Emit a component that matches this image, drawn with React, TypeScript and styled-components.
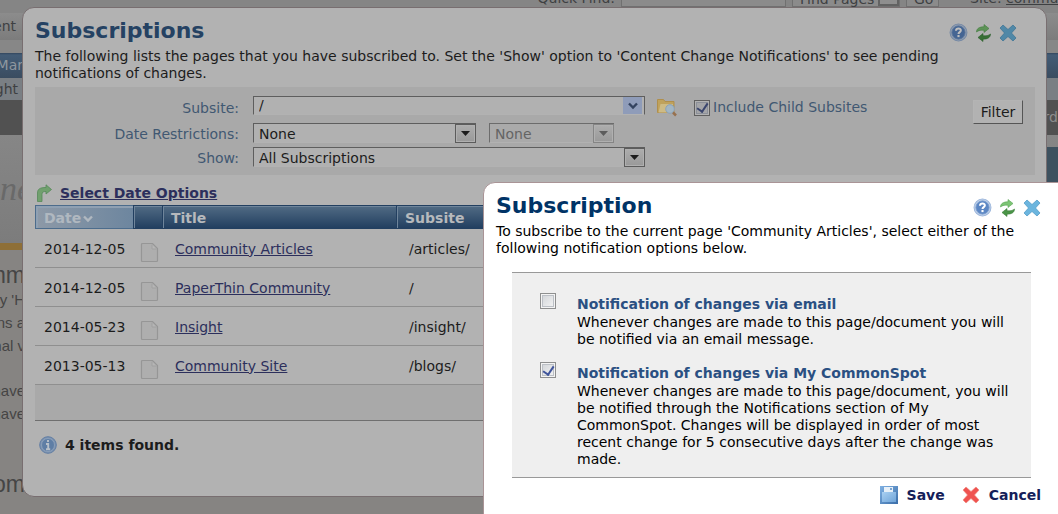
import React from 'react';
import styled, { createGlobalStyle, css } from 'styled-components';

const Global = createGlobalStyle`
  * { box-sizing: border-box; }
  body { margin: 0; background: #868482; overflow: hidden; }
  body, button, input, select { font-family: "DejaVu Sans", Verdana, sans-serif; font-size: 14px; line-height: 17px; }
  h1, h2, p { margin: 0; }
`;

const Screen = styled.div`
  position: relative;
  height: 100vh;
  min-height: 514px;
  overflow: hidden;
  color: #3e4042;
`;

const FindBar = styled.div`
  height: 13px;
  display: flex;
  align-items: flex-end;
  justify-content: flex-end;
  gap: 6px;
  padding-bottom: 6px;
  background: #858585;
`;
const FindText = styled.span`
  line-height: 17px;
  white-space: nowrap;
`;
const FindCell = styled.span<{ $width: number }>`
  flex: none;
  width: ${p => p.$width}px;
  height: 17px;
  display: flex;
  justify-content: space-between;
  padding-left: 7px;
  border: 1px solid #707070;
  line-height: 17px;
  background: #8b8b8b;
`;
const FindArrow = styled.span`
  width: 21px;
  border: 2px solid #626262;
  background: #8e8e8e;
`;
const SiteText = styled(FindText)`
  flex: none;
  width: 113px;
  padding-left: 25px;
  a { color: inherit; }
`;

const Band = styled.div<{ $h: number; $bg: string; $fg?: string }>`
  height: ${p => p.$h}px;
  background: ${p => p.$bg};
  color: ${p => p.$fg || '#3e4042'};
  display: flex;
  align-items: center;
  justify-content: space-between;
  white-space: nowrap;
`;
const Stub = styled.span<{ $w: number }>`
  width: ${p => p.$w}px;
  display: flex;
  justify-content: flex-end;
`;
const Script = styled.span`
  font: italic 34px/40px "Liberation Serif", serif;
  color: #696969;
`;
const SideBlock = styled.span`
  align-self: flex-start;
  width: 12px;
  height: 60px;
  margin-top: 12px;
  background: #3d515f;
`;
const Behind = styled.div`
  padding-top: 12px;
  font-family: "Liberation Sans", Arial, sans-serif;
`;
const BehindText = styled.p<{ $big?: boolean; $gap?: number }>`
  width: 25px;
  display: flex;
  justify-content: flex-end;
  white-space: nowrap;
  color: #454545;
  margin-top: ${p => p.$gap || 0}px;
  font-size: ${p => (p.$big ? 23 : 15)}px;
  line-height: ${p => (p.$big ? 26 : 23)}px;
`;

const dialog = css`
  position: absolute;
  border: 1px solid #8c7f80;
  border-radius: 12px;
`;
const ListDialog = styled.section`
  ${dialog}
  left: 22px;
  right: 11px;
  top: 7px;
  height: 490px;
  padding: 9px 11px 0 12px;
  border-color: #786e70;
  background: #b2b2b2;
  color: #1c1c1c;
`;
const FormDialog = styled.section`
  ${dialog}
  left: 483px;
  right: -12px;
  top: 182px;
  bottom: -12px;
  padding: 9px 28px 0 12px;
  border-color: #a99496;
  background: #fff;
  color: #000;
`;
const DialogHead = styled.header`
  display: flex;
  align-items: flex-start;
  justify-content: space-between;
  height: 31px;
`;
const Title = styled.h1<{ $dim?: boolean }>`
  font-size: 22px;
  line-height: 28px;
  color: ${p => (p.$dim ? '#254263' : '#003366')};
`;
const Tools = styled.div<{ $dim?: boolean }>`
  display: flex;
  align-items: center;
  gap: 7px;
  padding: 6px ${p => (p.$dim ? 18 : 0)}px 0 0;
  filter: ${p => (p.$dim ? 'brightness(0.75)' : 'none')};
`;
const IconButton = styled.button`
  display: flex;
  padding: 0;
  border: 0;
  background: none;
`;
const Intro = styled.p<{ $dim?: boolean }>`
  padding-right: ${p => (p.$dim ? 40 : 0)}px;
`;

const Filters = styled.form`
  display: grid;
  grid-template-columns: 207px 392px 1fr auto;
  column-gap: 11px;
  grid-template-rows: 23px 20px 20px;
  row-gap: 4px;
  align-items: center;
  margin-top: 5px;
  height: 88px;
  padding: 9px 12px 0 0;
  background: #a9a9a9;
`;
const Label = styled.label`
  padding: 2px 3px 0 0;
  color: #415872;
  text-align: right;
`;
const Field = styled.div`
  display: flex;
  gap: 13px;
`;
const ComboBox = styled.div`
  display: flex;
  align-self: start;
  height: 19px;
  border: 1px solid #5e5e5e;
  border-bottom-color: #b2b2b2;
  background: #b1b1b1;
`;
const ComboInput = styled.input`
  flex: 1;
  min-width: 0;
  padding: 0 5px;
  border: 0;
  background: none;
  color: #1c1c1c;
`;
const ComboArrow = styled.button`
  width: 19px;
  margin-right: 2px;
  padding: 0;
  border: 0;
  background: #8f9cb9;
  display: flex;
  align-items: center;
  justify-content: center;
`;
const SelectWrap = styled.div<{ $width?: number; $off?: boolean }>`
  position: relative;
  height: 20px;
  ${p => (p.$width ? `width: ${p.$width}px;` : 'flex: 1;')}
  border: 1px solid ${p => (p.$off ? '#6c6c6c' : '#5e5e5e')};
  border-bottom-color: #b2b2b2;
  background: ${p => (p.$off ? '#aaa' : '#b1b1b1')};
`;
const Select = styled.select`
  appearance: none;
  display: block;
  width: 100%;
  height: 20px;
  padding: 1px 24px 0 5px;
  border: 0;
  background: none;
  color: #1c1c1c;
  &:disabled { color: #646464; opacity: 1; }
`;
const SelectArrow = styled.span<{ $off?: boolean }>`
  position: absolute;
  right: -1px;
  top: 0;
  width: 21px;
  height: 19px;
  display: flex;
  align-items: center;
  justify-content: center;
  pointer-events: none;
  border: 1px solid ${p => (p.$off ? '#858585' : '#5c5c5c')};
  background: linear-gradient(#adadad, #999);
  box-shadow: inset 0 0 0 1px #b0b0b0;
`;
const Include = styled.div`
  display: flex;
  align-items: center;
  gap: 3px;
  color: #415872;
  white-space: nowrap;
`;
const BrowseButton = styled(IconButton)`
  margin-right: 13px;
`;
const CheckBox = styled.input<{ $dim?: boolean }>`
  appearance: none;
  width: 16px;
  height: 16px;
  margin: 0;
  flex: none;
  border: 1px solid ${p => (p.$dim ? '#5f5f5f' : '#8e8f8f')};
  background: ${p => (p.$dim ? '#a4a5a8' : 'linear-gradient(135deg, #cfd2d6, #f6f6f6)')};
  box-shadow: inset 0 0 0 1px ${p => (p.$dim ? '#b2b2b2' : '#f4f4f4')}, inset 0 0 0 2px ${p => (p.$dim ? '#8c9099' : '#bcc0c6')};
  display: grid;
  place-items: center;
  &:checked::after {
    content: "";
    width: 5px;
    height: 9px;
    margin-top: -2px;
    border: solid ${p => (p.$dim ? '#3a456d' : '#3f549b')};
    border-width: 0 2px 2px 0;
    transform: rotate(34deg);
  }
`;
const FilterButton = styled.button`
  grid-column: 4;
  grid-row: 1 / 3;
  align-self: start;
  height: 24px;
  width: 50px;
  margin-top: 4px;
  padding: 0;
  border: 1px solid #b4b4b4;
  border-right-color: #555;
  border-bottom-color: #555;
  background: #b2b2b2;
  color: #1c1c1c;
`;

const DateLink = styled.a`
  color: #2c2f5c;
  font-weight: bold;
`;
const DateRow = styled.div`
  display: flex;
  align-items: center;
  gap: 7px;
  height: 30px;
  padding: 6px 0 0 1px;
`;

const List = styled.table`
  width: 100%;
  table-layout: fixed;
  border-collapse: separate;
  border-spacing: 0;
  white-space: nowrap;
`;
const HeadCell = styled.th<{ $active?: boolean }>`
  height: 24px;
  padding: 2px 0 0 8px;
  text-align: left;
  color: ${p => (p.$active ? '#b0b8c0' : '#b6b9bc')};
  background: ${p => (p.$active ? 'linear-gradient(90deg, #8d99a7, #6d869f)' : 'linear-gradient(#516b84, #223f60)')};
  border: solid ${p => (p.$active ? '#4c6c8c' : '#223f60')};
  border-width: 1px 0 1px 1px;
  box-shadow: inset ${p => (p.$active ? '2px 2px 0 #8fa0b2' : '1px 1px 0 #6f859b')};
  svg { margin-left: 2px; }
`;
const Cell = styled.td`
  height: 39px;
  padding: 2px 0 0 9px;
  border-bottom: 1px solid #8f8f8f;
  a { color: #2c2f5c; margin-left: 4px; }
  span { margin-left: 4px; }
  svg { display: block; margin: 6px 0 0 -2px; }
`;
const FootCell = styled.td`
  height: 36px;
  background: #a9a9a9;
  border-bottom: 1px solid #6f6f6f;
`;
const Found = styled.p`
  display: flex;
  align-items: center;
  gap: 8px;
  padding: 15px 4px 0;
  font-weight: bold;
`;

const Options = styled.div`
  margin: 15px 10px 0 16px;
  padding: 20px 12px 9px 28px;
  display: flex;
  flex-direction: column;
  gap: 14px;
  background: #efefef;
  border: solid #999;
  border-width: 1px 0;
`;
const Option = styled.div`
  display: flex;
  gap: 21px;
`;
const OptionText = styled.div`
  padding-top: 2px;
`;
const OptionLabel = styled.label`
  display: block;
  font-weight: bold;
  line-height: 19px;
  color: #2a5082;
`;
const Actions = styled.footer`
  display: flex;
  justify-content: flex-end;
  gap: 17px;
  margin-top: 8px;
`;
const Action = styled.button`
  display: flex;
  align-items: center;
  gap: 9px;
  padding: 0;
  border: 0;
  background: none;
  font-weight: bold;
  color: #142059;
`;

const HelpIcon = () => (
  <svg width="19" height="19" viewBox="0 0 18 18">
    <circle cx="9" cy="9" r="8" fill="#c3d3ea" stroke="#9db7dc" />
    <circle cx="9" cy="9" r="6.3" fill="#5c87c4" stroke="#7ea0d0" strokeWidth=".8" />
    <path d="M6.6 7.3C6.8 4.4 11.4 4.5 11.2 7.2 11.1 8.6 9 8.7 9 10.4" fill="none" stroke="#fff" strokeWidth="1.9" />
    <rect x="8" y="11.4" width="2" height="2" fill="#fff" />
  </svg>
);
const RefreshIcon = () => (
  <svg width="17" height="18" viewBox="0 0 17 18">
    <path d="M1.500 8C1.500 4.500 4.500 2.800 9 2.800V.5L14 4.500 9 8.500V6.200C6 6 3.500 6.300 1.500 8z" fill="#7cc474" stroke="#58a452" strokeWidth=".6" />
    <path d="M15.500 10C15.500 13.500 12.500 15.200 8 15.200V17.500L3 13.500 8 9.500V11.800C11 12 13.500 11.700 15.500 10z" fill="#4a9447" stroke="#397c38" strokeWidth=".6" />
  </svg>
);
const CloseIcon = ({ color = '#6bb5de', edge = '#4b97c4', size = 18 }: { color?: string; edge?: string; size?: number }) => (
  <svg width={size} height={size} viewBox="0 0 18 18">
    <path d="M1 4L4 1 9 5.500 14 1 17 4 12.500 9 17 14 14 17 9 12.500 4 17 1 14 5.500 9z" fill={color} stroke={edge} strokeWidth=".7" strokeLinejoin="round" />
  </svg>
);
const FolderIcon = () => (
  <svg width="22" height="19" viewBox="0 0 22 19">
    <path d="M1.500 1.500h6l1.500 2h9v11h-16.500z" fill="#bfa25c" stroke="#b08f4c" />
    <path d="M4.500 6h12.500v8.500H2.500z" fill="#cdbb86" />
    <circle cx="14" cy="11" r="4.300" fill="#a2b6c4" stroke="#8ba1b8" />
    <path d="M17 14.500l3 3" stroke="#97714f" strokeWidth="2.500" />
  </svg>
);
const TurnIcon = () => (
  <svg width="17" height="18" viewBox="0 0 17 18">
    <path d="M1.500 17.500V9C1.500 5 4 3.500 10 3.500V.8L15.500 5.500 10 10V7.500C7 7.500 6 8 6 10.500V17.500z" fill="#71a06e" stroke="#568959" strokeWidth=".8" />
  </svg>
);
const PageIcon = () => (
  <svg width="19" height="21" viewBox="0 0 19 21">
    <path d="M2.500 1.500H12.500L17.500 6.500V18.500Q17.500 19.500 16.500 19.500H2.500Q1.500 19.500 1.500 18.500V2.500Q1.500 1.500 2.500 1.500z" fill="#aeaeae" stroke="#969696" strokeWidth="1.200" />
    <path d="M12 2.500V7H16.500" fill="#b6b6b6" stroke="#a0a0a0" />
  </svg>
);
const InfoIcon = () => (
  <svg width="18" height="18" viewBox="0 0 18 18">
    <circle cx="9" cy="9" r="8.300" fill="#7d93b1" stroke="#607da3" />
    <circle cx="9" cy="9" r="6.500" fill="#5f7ea5" stroke="#95a7bd" strokeWidth=".7" />
    <path d="M9 4v2M7 8h2.200v5M7 13.200h4.200" fill="none" stroke="#b8c0c9" strokeWidth="1.900" />
  </svg>
);
const SaveIcon = () => (
  <svg width="18" height="18" viewBox="0 0 18 18">
    <defs>
      <linearGradient id="disk" x1="0" y1="0" x2="1" y2="1">
        <stop offset="0" stopColor="#7fb0e2" />
        <stop offset="1" stopColor="#3a6da8" />
      </linearGradient>
      <linearGradient id="plate" x1="0" y1="0" x2="1" y2="1">
        <stop offset="0" stopColor="#a9d0f2" />
        <stop offset="1" stopColor="#6fa4d8" />
      </linearGradient>
    </defs>
    <rect width="18" height="18" fill="url(#disk)" />
    <rect x="2" y="6" width="14" height="10" fill="url(#plate)" />
    <rect x="4" y="1" width="9" height="5" fill="#e7f0f8" />
    <rect x="10" y="2" width="2" height="2" fill="#7aa5d2" />
  </svg>
);
const Chevron = ({ color, width = 10 }: { color: string; width?: number }) => (
  <svg width={width} height="8" viewBox="0 0 10 8">
    <path d="M1 1.500l4 4 4-4" fill="none" stroke={color} strokeWidth="2.400" />
  </svg>
);
const Triangle = ({ color }: { color: string }) => (
  <svg width="9" height="5" viewBox="0 0 9 5"><path d="M0 0h9L4.500 5z" fill={color} /></svg>
);

const DialogTools = ({ dim }: { dim?: boolean }) => (
  <Tools $dim={dim}>
    <IconButton aria-label="Help"><HelpIcon /></IconButton>
    <IconButton aria-label="Refresh"><RefreshIcon /></IconButton>
    <IconButton aria-label="Close"><CloseIcon /></IconButton>
  </Tools>
);

const rows = [
  ['2014-12-05', 'Community Articles', '/articles/'],
  ['2014-12-05', 'PaperThin Community', '/'],
  ['2014-05-23', 'Insight', '/insight/'],
  ['2013-05-13', 'Community Site', '/blogs/'],
];

export default function App() {
  return (
    <Screen>
      <Global />
      <FindBar>
        <FindText>Quick Find:</FindText>
        <FindCell $width={165} />
        <FindCell $width={108}>Find Pages<FindArrow /></FindCell>
        <FindCell $width={33}>Go</FindCell>
        <SiteText>Site: <a href="#site">commu</a></SiteText>
      </FindBar>
      <Band $h={27} $bg="linear-gradient(#8c8c8c, #7c7c7c)"><Stub $w={16}>ent</Stub></Band>
      <Band $h={13} $bg="#878787" />
      <Band $h={25} $bg="linear-gradient(#33475e, #435c76 2px, #3a4c60)" $fg="#8e979f"><Stub $w={23}>Mar</Stub></Band>
      <Band $h={22} $bg="#7a7f84"><Stub $w={18}>ght</Stub></Band>
      <Band $h={35} $bg="#515151" $fg="#8d8d8d"><span /><span>rd</span></Band>
      <Band $h={108} $bg="linear-gradient(#868686, #7c7c7c)"><Script>ne</Script><SideBlock /></Band>
      <Band $h={7} $bg="#8e6f37" />
      <Behind>
        <BehindText $big>mm</BehindText>
        <BehindText>y 'H</BehindText>
        <BehindText>ns a</BehindText>
        <BehindText>nal v</BehindText>
        <BehindText $gap={22}>have</BehindText>
        <BehindText>have</BehindText>
        <BehindText $big $gap={46}>om</BehindText>
      </Behind>

      <ListDialog>
        <DialogHead>
          <Title $dim>Subscriptions</Title>
          <DialogTools dim />
        </DialogHead>
        <Intro $dim>The following lists the pages that you have subscribed to. Set the 'Show' option to 'Content Change Notifications' to see pending notifications of changes.</Intro>
        <Filters>
          <Label htmlFor="subsite">Subsite:</Label>
          <ComboBox>
            <ComboInput id="subsite" defaultValue="/" />
            <ComboArrow type="button" aria-label="Choose subsite"><Chevron color="#34435f" /></ComboArrow>
          </ComboBox>
          <Include>
            <BrowseButton type="button" aria-label="Browse"><FolderIcon /></BrowseButton>
            <CheckBox $dim id="children" type="checkbox" defaultChecked />
            <label htmlFor="children">Include Child Subsites</label>
          </Include>
          <FilterButton type="button">Filter</FilterButton>
          <Label htmlFor="range">Date Restrictions:</Label>
          <Field>
            <SelectWrap $width={223}>
              <Select id="range"><option>None</option></Select>
              <SelectArrow><Triangle color="#1c1c1c" /></SelectArrow>
            </SelectWrap>
            <SelectWrap $width={125} $off>
              <Select disabled aria-label="Date period"><option>None</option></Select>
              <SelectArrow $off><Triangle color="#5c5c5c" /></SelectArrow>
            </SelectWrap>
          </Field>
          <span />
          <Label htmlFor="show">Show:</Label>
          <Field>
            <SelectWrap>
              <Select id="show"><option>All Subscriptions</option></Select>
              <SelectArrow><Triangle color="#1c1c1c" /></SelectArrow>
            </SelectWrap>
          </Field>
        </Filters>
        <DateRow>
          <TurnIcon />
          <DateLink href="#dates">Select Date Options</DateLink>
        </DateRow>
        <List>
          <colgroup>
            <col width="98" /><col width="29" /><col width="234" /><col />
          </colgroup>
          <thead>
            <tr>
              <HeadCell $active>Date<Chevron color="#b0b8c0" /></HeadCell>
              <HeadCell />
              <HeadCell>Title</HeadCell>
              <HeadCell>Subsite</HeadCell>
            </tr>
          </thead>
          <tbody>
            {rows.map(([date, title, site]) => (
              <tr key={title}>
                <Cell>{date}</Cell>
                <Cell><PageIcon /></Cell>
                <Cell><a href="#page">{title}</a></Cell>
                <Cell><span>{site}</span></Cell>
              </tr>
            ))}
            <tr><FootCell colSpan={4} /></tr>
          </tbody>
        </List>
        <Found><InfoIcon />4 items found.</Found>
      </ListDialog>

      <FormDialog>
        <DialogHead>
          <Title>Subscription</Title>
          <DialogTools />
        </DialogHead>
        <Intro>To subscribe to the current page 'Community Articles', select either of the following notification options below.</Intro>
        <Options>
          <Option>
            <CheckBox type="checkbox" id="email" />
            <OptionText>
              <OptionLabel htmlFor="email">Notification of changes via email</OptionLabel>
              <p>Whenever changes are made to this page/document you will be notified via an email message.</p>
            </OptionText>
          </Option>
          <Option>
            <CheckBox type="checkbox" id="spot" defaultChecked />
            <OptionText>
              <OptionLabel htmlFor="spot">Notification of changes via My CommonSpot</OptionLabel>
              <p>Whenever changes are made to this page/document, you will be notified through the Notifications section of My CommonSpot. Changes will be displayed in order of most recent change for 5 consecutive days after the change was made.</p>
            </OptionText>
          </Option>
        </Options>
        <Actions>
          <Action><SaveIcon />Save</Action>
          <Action><CloseIcon color="#ef5350" edge="#f08a80" />Cancel</Action>
        </Actions>
      </FormDialog>
    </Screen>
  );
}
